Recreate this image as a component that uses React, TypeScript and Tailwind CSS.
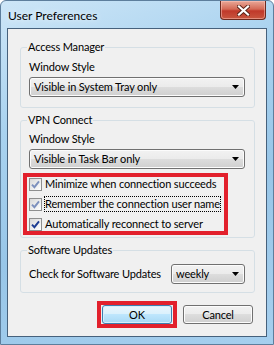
const font = "font-['Lato','Noto_Sans',sans-serif]";

function Select({ value, className = "" }: { value: string; className?: string }) {
  return (
    <div
      className={`flex h-[20px] items-center justify-between rounded-[3px] border border-[#707070] bg-[linear-gradient(#f2f2f2_0%,#ebebeb_50%,#dddddd_50%,#cfcfcf_100%)] pl-[4px] pr-[5px] shadow-[inset_0_0_0_1px_#fcfcfc] ${className}`}
    >
      <span className="leading-[16px]">{value}</span>
      <svg width="7" height="4" viewBox="0 0 7 4">
        <path d="M0 0h7L3.5 4z" fill="#000" />
      </svg>
    </div>
  );
}

function Check({ dark }: { dark?: boolean }) {
  return (
    <span className="flex h-[13px] w-[13px] shrink-0 items-center justify-center border border-[#8e8f8f] bg-[linear-gradient(135deg,#d8d8d8,#ffffff)]">
      <svg width="9" height="9" viewBox="0 0 9 9">
        <path
          d="M1 4.6l2.4 2.6L8 1.4"
          stroke={dark ? "#1d3c92" : "#7d90bd"}
          strokeWidth="1.9"
          fill="none"
        />
      </svg>
    </span>
  );
}

function Group({ title, children, className = "" }: { title: string; children: React.ReactNode; className?: string }) {
  return (
    <fieldset className={`rounded-[3px] border border-[#d5dfe5] pl-[8px] pr-[9px] ${className}`}>
      <legend className="-ml-[2px] px-[1px] leading-[16px]">{title}</legend>
      {children}
    </fieldset>
  );
}

export default function App() {
  const checks = [
    { label: "Minimize when connection succeeds" },
    { label: "Remember the connection user name", focus: true },
    { label: "Automatically reconnect to server", dark: true },
  ];

  return (
    <div className={`${font} flex h-[345px] w-[274px] flex-col overflow-hidden whitespace-nowrap rounded-t-[6px] border border-[#5d7e9c] bg-[linear-gradient(160deg,#cde6f7_0%,#a9d2ef_30%,#98c6e8_60%,#a6cfee_100%)] text-[11px] tracking-[-0.15px] text-black`}>
      {/* title bar */}
      <div className="flex h-[27px] shrink-0 justify-between">
        <span className="self-center pl-[7px] pt-[2px] text-[12px] leading-[16px] tracking-normal [text-shadow:0_0_6px_#ffffff]">User Preferences</span>
        <div className="mr-[7px] flex h-[19px] w-[46px] items-center justify-center rounded-b-[4px] border border-t-0 border-[#6c2a1f] bg-[linear-gradient(#e9a898_0%,#d46a56_45%,#c0392a_55%,#c8563f_100%)] shadow-[inset_0_0_0_1px_rgba(255,200,190,0.5)]">
          <svg width="13" height="11" viewBox="0 0 13 11">
            <path d="M2 1.5l9 8M11 1.5l-9 8" stroke="#5a2418" strokeWidth="4" strokeLinecap="square" />
            <path d="M2 1.5l9 8M11 1.5l-9 8" stroke="#ffffff" strokeWidth="2.2" strokeLinecap="square" />
          </svg>
        </div>
      </div>

      {/* client area */}
      <div className="mx-[6px] flex h-[309px] shrink-0 flex-col border border-[#46617c] bg-[#f0f0f0] pl-[12px] pr-[11px] pt-[10px]">
        <Group title="Access Manager" className="pb-[10px]">
          <div className="mt-[4px] leading-[16px]">Window Style</div>
          <Select value="Visible in System Tray only" className="mt-[2px]" />
        </Group>

        <Group title="VPN Connect" className="mt-[4px] pb-[2px]">
          <div className="mt-[3px] leading-[16px]">Window Style</div>
          <Select value="Visible in Task Bar only" className="mt-[2px]" />
          <div className="-ml-[6px] mt-[4px] flex w-[205px] flex-col gap-[6px] border-[4px] border-[#e2202c] pl-[2px]">
            {checks.map((c) => (
              <div key={c.label} className="flex h-[14px] items-center gap-[3px]">
                <Check dark={c.dark} />
                <span className={`leading-[14px] ${c.focus ? "outline outline-1 outline-dotted outline-black" : ""}`}>{c.label}</span>
              </div>
            ))}
          </div>
        </Group>

        <Group title="Software Updates" className="mt-[4px] pb-[8px]">
          <div className="mt-[6px] flex items-center justify-between">
            <span className="leading-[16px]">Check for Software Updates</span>
            <Select value="weekly" className="w-[74px]" />
          </div>
        </Group>

        <div className="mt-[8px] flex items-center">
          <div className="ml-[77px] border-[4px] border-[#e2202c] px-[1px]">
            <button className="h-[19px] w-[70px] rounded-[3px] border border-[#3c7fb1] bg-[linear-gradient(#eaf6fd_0%,#d9f0fc_50%,#bee6fd_50%,#a7d9f5_100%)] leading-[16px] shadow-[inset_0_0_0_1px_#d8eefa]">
              OK
            </button>
          </div>
          <button className="ml-[6px] h-[19px] w-[70px] rounded-[3px] border border-[#707070] bg-[linear-gradient(#f2f2f2_0%,#ebebeb_50%,#dddddd_50%,#cfcfcf_100%)] leading-[16px] shadow-[inset_0_0_0_1px_#fcfcfc]">
            Cancel
          </button>
        </div>
      </div>
    </div>
  );
}
